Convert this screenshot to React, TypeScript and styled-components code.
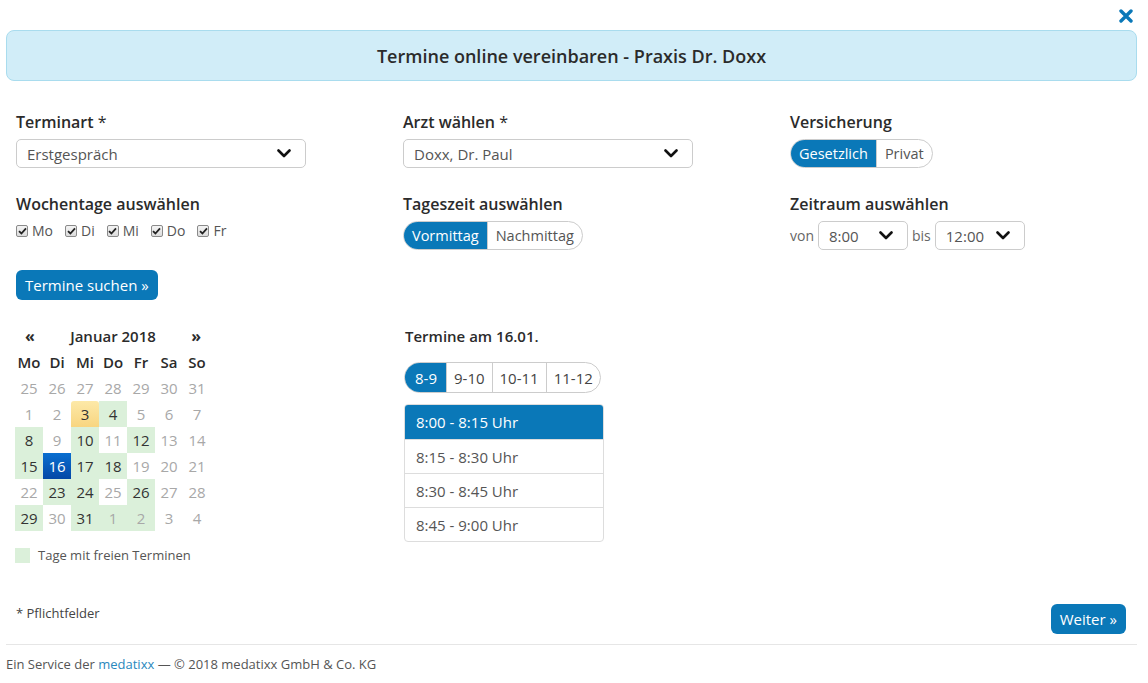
import React from 'react';
import styled, { createGlobalStyle, css } from 'styled-components';

const blue = '#0a78b8';

const GlobalStyle = createGlobalStyle`
  * { box-sizing: border-box; }
  body {
    margin: 0;
    background: #fff;
    font-family: "Open Sans", "Noto Sans", sans-serif;
    color: #333;
  }
`;

const Page = styled.div`
  width: 1148px;
  padding: 0 11px 0 6px;
`;

const TopBar = styled.div`
  height: 30px;
  display: flex;
  justify-content: flex-end;
  align-items: center;
  padding-right: 3px;
`;

const CloseButton = styled.button`
  border: 0;
  background: none;
  padding: 0;
  width: 16px;
  height: 16px;
  display: flex;
  align-items: center;
  justify-content: center;
  cursor: pointer;
  margin-top: 2px;
`;

const Header = styled.div`
  height: 51px;
  border: 1px solid #a9dcee;
  background: #d1edf8;
  border-radius: 8px;
  display: flex;
  align-items: center;
  justify-content: center;
`;

const Title = styled.h1`
  margin: 0;
  font-size: 18px;
  font-weight: 600;
  color: #2b2b2b;
`;

const Form = styled.div`
  padding: 32px 10px 0;
`;

const Grid = styled.div`
  display: grid;
  grid-template-columns: 387px 387px 1fr;
  row-gap: 27px;
`;

const Field = styled.div`
  display: flex;
  flex-direction: column;
  align-items: flex-start;
`;

const Label = styled.div`
  font-size: 16px;
  font-weight: 600;
  line-height: 19px;
  margin-bottom: 7px;
  color: #2b2b2b;
`;

const Star = styled.span`
  font-weight: 400;
`;

const SelectBox = styled.div<{ $width: number }>`
  width: ${p => p.$width}px;
  height: 29px;
  border: 1px solid #ccc;
  border-radius: 5px;
  display: flex;
  align-items: center;
  justify-content: space-between;
  padding: 0 14px 0 10px;
  font-size: 15px;
  color: #555;
  background: #fff;
`;

const Toggle = styled.div`
  display: inline-flex;
  height: 29px;
  border: 1px solid #ccc;
  border-radius: 15px;
  overflow: hidden;
`;

const ToggleItem = styled.div<{ $active?: boolean }>`
  display: flex;
  align-items: center;
  padding: 0 8px;
  font-size: 14.5px;
  color: #555;
  & + & { border-left: 1px solid #ccc; }
  ${p => p.$active && css`
    background: ${blue};
    color: #fff;
  `}
`;

const Checks = styled.div`
  display: flex;
  gap: 12px;
  margin-top: 0;
`;

const CheckItem = styled.label`
  display: flex;
  align-items: center;
  gap: 4px;
  font-size: 14px;
  color: #555;
`;

const Box = styled.span`
  width: 12px;
  height: 12px;
  border: 1px solid #8a8a8a;
  border-radius: 2px;
  background: linear-gradient(#f4f4f4, #dcdcdc);
  display: flex;
  align-items: center;
  justify-content: center;
`;

const RangeRow = styled.div`
  display: flex;
  align-items: center;
  gap: 4px;
  font-size: 14px;
  color: #666;
`;

const PrimaryButton = styled.button`
  border: 0;
  background: ${blue};
  color: #fff;
  border-radius: 6px;
  height: 30px;
  padding: 0 9px;
  font-family: inherit;
  font-size: 15px;
  cursor: pointer;
`;

const SearchRow = styled.div`
  margin-top: 20px;
`;

const Results = styled.div`
  display: grid;
  grid-template-columns: 388px 1fr;
  margin-top: 23px;
`;

const Calendar = styled.div`
  width: 196px;
  margin-left: -1px;
`;

const CalHead = styled.div`
  height: 26px;
  display: flex;
  align-items: center;
  justify-content: space-between;
  padding: 0 10px;
  font-size: 15px;
  font-weight: 600;
  color: #2b2b2b;
`;

const Arrow = styled.span`
  font-weight: 700;
  font-size: 16px;
`;

const DayGrid = styled.div`
  display: grid;
  grid-template-columns: repeat(7, 28px);
  grid-auto-rows: 26px;
`;

const DayName = styled.div`
  display: flex;
  align-items: center;
  justify-content: center;
  font-size: 15px;
  font-weight: 600;
  color: #2b2b2b;
`;

type DayKind = 'none' | 'free' | 'today' | 'selected';

const Day = styled.div<{ $kind: DayKind; $muted?: boolean }>`
  display: flex;
  align-items: center;
  justify-content: center;
  font-size: 15px;
  color: ${p => (p.$muted ? '#a8a8a8' : '#333')};
  ${p => p.$kind === 'free' && css`
    background: #dbf0da;
  `}
  ${p => p.$kind === 'today' && css`
    background: linear-gradient(#fde9a8, #f8d580);
    border-radius: 3px 3px 0 0;
    color: #333;
  `}
  ${p => p.$kind === 'selected' && css`
    background: linear-gradient(#0a6fd0, #0448a6);
    color: #fff;
  `}
`;

const Legend = styled.div`
  display: flex;
  align-items: center;
  gap: 8px;
  margin-top: 15px;
  font-size: 13px;
  color: #555;
`;

const Swatch = styled.span`
  width: 15px;
  height: 15px;
  background: #dbf0da;
`;

const Slots = styled.div`
  display: flex;
  flex-direction: column;
  align-items: flex-start;
`;

const SlotTitle = styled.div`
  height: 26px;
  display: flex;
  align-items: center;
  padding-left: 1px;
  font-size: 15px;
  font-weight: 600;
  color: #2b2b2b;
`;

const HourTabs = styled.div`
  display: inline-flex;
  height: 31px;
  margin-top: 13px;
  border: 1px solid #ccc;
  border-radius: 16px;
  overflow: hidden;
`;

const HourTab = styled.div<{ $active?: boolean }>`
  display: flex;
  align-items: center;
  padding: 0 7px;
  font-size: 15px;
  color: #444;
  & + & { border-left: 1px solid #ccc; }
  ${p => p.$active && css`
    background: ${blue};
    color: #fff;
    padding: 0 9px 0 10px;
  `}
`;

const SlotList = styled.div`
  width: 200px;
  margin-top: 11px;
  border: 1px solid #ddd;
  border-radius: 4px;
  overflow: hidden;
`;

const Slot = styled.div<{ $active?: boolean }>`
  height: 34px;
  display: flex;
  align-items: center;
  padding-left: 11px;
  font-size: 15px;
  color: #555;
  & + & { border-top: 1px solid #ddd; }
  ${p => p.$active && css`
    background: ${blue};
    color: #fff;
  `}
`;

const BottomRow = styled.div`
  display: flex;
  justify-content: space-between;
  align-items: flex-start;
  margin-top: 40px;
  padding-right: 1px;
`;

const Note = styled.div`
  font-size: 13px;
  color: #444;
`;

const Rule = styled.hr`
  border: 0;
  border-top: 1px solid #e6e6e6;
  margin: 10px 0 0;
`;

const Footer = styled.div`
  font-size: 13px;
  color: #555;
  padding-top: 10px;
`;

const FooterLink = styled.a`
  color: #2a88bd;
  text-decoration: none;
`;

const Chevron = () => (
  <svg width="14" height="9" viewBox="0 0 14 9">
    <polyline points="1.5,1.5 7,7 12.5,1.5" fill="none" stroke="#111" strokeWidth="2.6" strokeLinecap="round" strokeLinejoin="round" />
  </svg>
);

const Tick = () => (
  <svg width="9" height="8" viewBox="0 0 9 8">
    <polyline points="1,4.2 3.4,6.5 8,1.3" fill="none" stroke="#222" strokeWidth="1.8" />
  </svg>
);

const days = ['Mo', 'Di', 'Mi', 'Do', 'Fr', 'Sa', 'So'];

type Cell = { n: number; kind: DayKind; muted?: boolean };

const freeDays = [4, 8, 10, 12, 15, 17, 18, 23, 24, 26, 29, 31];

const buildCells = (): Cell[] => {
  const cells: Cell[] = [];
  for (let d = 25; d <= 31; d++) cells.push({ n: d, kind: 'none', muted: true });
  for (let d = 1; d <= 31; d++) {
    let kind: DayKind = 'none';
    if (d === 3) kind = 'today';
    else if (d === 16) kind = 'selected';
    else if (freeDays.includes(d)) kind = 'free';
    cells.push({ n: d, kind, muted: kind === 'none' });
  }
  cells.push({ n: 1, kind: 'free', muted: true });
  cells.push({ n: 2, kind: 'free', muted: true });
  cells.push({ n: 3, kind: 'none', muted: true });
  cells.push({ n: 4, kind: 'none', muted: true });
  return cells;
};

const slots = ['8:00 - 8:15 Uhr', '8:15 - 8:30 Uhr', '8:30 - 8:45 Uhr', '8:45 - 9:00 Uhr'];

export default function App() {
  const cells = buildCells();
  return (
    <Page>
      <GlobalStyle />
      <TopBar>
        <CloseButton aria-label="Schließen">
          <svg width="14" height="14" viewBox="0 0 14 14">
            <path d="M2 2 L12 12 M12 2 L2 12" stroke={blue} strokeWidth="3.4" strokeLinecap="round" />
          </svg>
        </CloseButton>
      </TopBar>

      <Header>
        <Title>Termine online vereinbaren - Praxis Dr. Doxx</Title>
      </Header>

      <Form>
        <Grid>
          <Field>
            <Label>Terminart <Star>*</Star></Label>
            <SelectBox $width={290}>Erstgespräch<Chevron /></SelectBox>
          </Field>
          <Field>
            <Label>Arzt wählen <Star>*</Star></Label>
            <SelectBox $width={290}>Doxx, Dr. Paul<Chevron /></SelectBox>
          </Field>
          <Field>
            <Label>Versicherung</Label>
            <Toggle>
              <ToggleItem $active>Gesetzlich</ToggleItem>
              <ToggleItem>Privat</ToggleItem>
            </Toggle>
          </Field>

          <Field>
            <Label>Wochentage auswählen</Label>
            <Checks>
              {['Mo', 'Di', 'Mi', 'Do', 'Fr'].map(d => (
                <CheckItem key={d}>
                  <Box><Tick /></Box>
                  {d}
                </CheckItem>
              ))}
            </Checks>
          </Field>
          <Field>
            <Label>Tageszeit auswählen</Label>
            <Toggle>
              <ToggleItem $active>Vormittag</ToggleItem>
              <ToggleItem>Nachmittag</ToggleItem>
            </Toggle>
          </Field>
          <Field>
            <Label>Zeitraum auswählen</Label>
            <RangeRow>
              von
              <SelectBox $width={90}>8:00<Chevron /></SelectBox>
              bis
              <SelectBox $width={90}>12:00<Chevron /></SelectBox>
            </RangeRow>
          </Field>
        </Grid>

        <SearchRow>
          <PrimaryButton>Termine suchen »</PrimaryButton>
        </SearchRow>

        <Results>
          <Calendar>
            <CalHead>
              <Arrow>«</Arrow>
              <span>Januar 2018</span>
              <Arrow>»</Arrow>
            </CalHead>
            <DayGrid>
              {days.map(d => <DayName key={d}>{d}</DayName>)}
              {cells.map((c, i) => (
                <Day key={i} $kind={c.kind} $muted={c.muted}>{c.n}</Day>
              ))}
            </DayGrid>
            <Legend>
              <Swatch />
              Tage mit freien Terminen
            </Legend>
          </Calendar>

          <Slots>
            <SlotTitle>Termine am 16.01.</SlotTitle>
            <HourTabs>
              <HourTab $active>8-9</HourTab>
              <HourTab>9-10</HourTab>
              <HourTab>10-11</HourTab>
              <HourTab>11-12</HourTab>
            </HourTabs>
            <SlotList>
              {slots.map((s, i) => (
                <Slot key={s} $active={i === 0}>{s}</Slot>
              ))}
            </SlotList>
          </Slots>
        </Results>

        <BottomRow>
          <Note>* Pflichtfelder</Note>
          <PrimaryButton>Weiter »</PrimaryButton>
        </BottomRow>
      </Form>

      <Rule />
      <Footer>
        Ein Service der <FooterLink href="#">medatixx</FooterLink> — © 2018 medatixx GmbH &amp; Co. KG
      </Footer>
    </Page>
  );
}
